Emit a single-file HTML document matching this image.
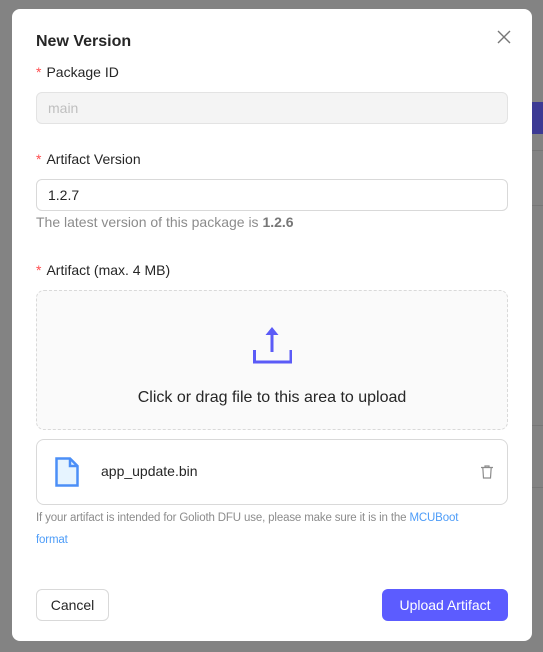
<!DOCTYPE html>
<html><head><style>
*{box-sizing:border-box;margin:0;padding:0}
body{width:543px;height:652px;background:#838383;font-family:"Liberation Sans",sans-serif;position:relative;overflow:hidden}
.abs{position:absolute}
.modal{left:12px;top:9px;width:520px;height:632px;background:#fff;border-radius:8px}
.lbl{font-size:14px;color:#262626;left:36px}
.lbl b{color:#ff4d4f;font-weight:normal;margin-right:5px}
.inp{left:36px;width:472px;height:32px;border:1px solid #d9d9d9;border-radius:6px;font-size:14px;padding-left:11px;line-height:30px}
</style></head><body>
<div class="abs" style="left:532px;top:102px;width:11px;height:32px;background:#3c3a94"></div>
<div class="abs" style="left:532px;top:150px;width:11px;height:1px;background:#777"></div>
<div class="abs" style="left:532px;top:205px;width:11px;height:1px;background:#777"></div>
<div class="abs" style="left:532px;top:425px;width:11px;height:1px;background:#777"></div>
<div class="abs" style="left:532px;top:487px;width:11px;height:1px;background:#777"></div>
<div class="abs modal"></div>
<div class="abs" style="left:36px;top:33px;font-size:16px;font-weight:bold;color:#262626">New Version</div>
<svg class="abs" style="left:497px;top:30px" width="14" height="14" viewBox="0 0 14 14"><path d="M1 1L13 13M13 1L1 13" stroke="#777" stroke-width="1.4"/></svg>
<div class="abs lbl" style="top:64px"><b>*</b>Package ID</div>
<div class="abs inp" style="top:92px;background:#f4f4f4;color:#bfbfbf;border-color:#e3e3e3">main</div>
<div class="abs lbl" style="top:151px"><b>*</b>Artifact Version</div>
<div class="abs inp" style="top:179px;color:#262626">1.2.7</div>
<div class="abs" style="left:36px;top:214px;font-size:14px;color:#8c8c8c">The latest version of this package is <b style="color:#777">1.2.6</b></div>
<div class="abs lbl" style="top:262px"><b>*</b>Artifact (max. 4 MB)</div>
<div class="abs" style="left:36px;top:290px;width:472px;height:140px;border:1px dashed #d9d9d9;border-radius:8px;background:#fafafa"></div>
<svg class="abs" style="left:252px;top:325px" width="40" height="40" viewBox="0 0 40 40"><path d="M20 27V6" stroke="#5b5bf7" stroke-width="3" fill="none"/><path d="M13.5 10L20 2L26.5 10Z" fill="#5b5bf7"/><path d="M2.5 25V37H39V25" stroke="#5b5bf7" stroke-width="3" fill="none"/></svg>
<div class="abs" style="left:36px;width:472px;top:389px;text-align:center;font-size:16px;color:#262626">Click or drag file to this area to upload</div>
<div class="abs" style="left:36px;top:439px;width:472px;height:66px;border:1px solid #d9d9d9;border-radius:8px"></div>
<svg class="abs" style="left:55px;top:457px" width="24" height="30" viewBox="0 0 24 30"><path d="M1.5 1.5H15L22.5 9V28.5H1.5Z" fill="#e6f4ff" stroke="#4c8ff7" stroke-width="2.5"/><path d="M15 1.5V9H22.5" fill="none" stroke="#4c8ff7" stroke-width="2.5"/></svg>
<div class="abs" style="left:101px;top:463px;font-size:14px;color:#262626">app_update.bin</div>
<svg class="abs" style="left:481px;top:465px" width="12" height="14" viewBox="0 0 12 14"><path d="M0 2.5H12M4 2.5V1H8V2.5M1.8 2.5L2.5 13H9.5L10.2 2.5" fill="none" stroke="#8c8c8c" stroke-width="1.2"/></svg>
<div class="abs" style="left:36px;top:507px;width:472px;font-size:11.5px;letter-spacing:-0.15px;line-height:22px;color:#8c8c8c">If your artifact is intended for Golioth DFU use, please make sure it is in the <span style="color:#4d9cf8">MCUBoot<br>format</span></div>
<div class="abs" style="left:36px;top:589px;width:73px;height:32px;border:1px solid #d9d9d9;border-radius:6px;font-size:14px;color:#262626;text-align:center;line-height:30px">Cancel</div>
<div class="abs" style="left:382px;top:589px;width:126px;height:32px;background:#5c5cff;border-radius:6px;font-size:14px;color:#fff;text-align:center;line-height:32px">Upload Artifact</div>
</body></html>
